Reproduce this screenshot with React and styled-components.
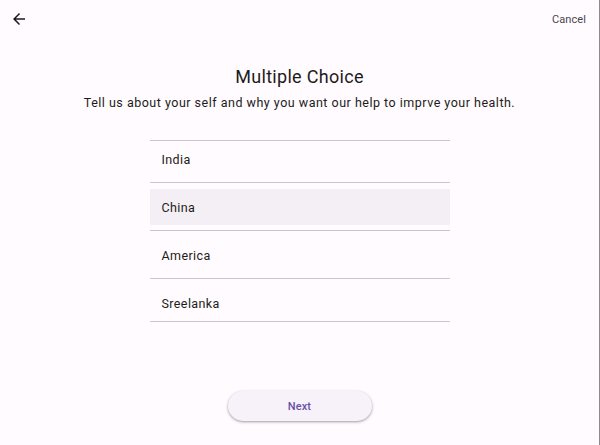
import React, { useState } from "react";
import styled, { createGlobalStyle } from "styled-components";

const options = ["India", "China", "America", "Sreelanka"];

const GlobalStyle = createGlobalStyle`
  html, body {
    margin: 0;
    height: 100%;
    background: #fffbfe;
    font-family: Roboto, "Noto Sans", sans-serif;
    color: #1d1b20;
  }
  #root {
    height: 100%;
  }
`;

const App = () => {
  const [selected, setSelected] = useState("China");

  return (
    <>
      <GlobalStyle />
      <Page>
        <Header>
          <IconButton aria-label="Back">
            <svg width="18" height="18" viewBox="0 0 24 24" fill="#1d1b20">
              <path d="M20 11H7.83l5.59-5.59L12 4l-8 8 8 8 1.41-1.41L7.83 13H20v-2z" />
            </svg>
          </IconButton>
          <TextButton>Cancel</TextButton>
        </Header>

        <Main>
          <Title>Multiple Choice</Title>
          <Subtitle>
            Tell us about your self and why you want our help to imprve your
            health.
          </Subtitle>

          <List>
            {options.map((option) => (
              <Row key={option} onClick={() => setSelected(option)}>
                <Tile $active={selected === option}>{option}</Tile>
              </Row>
            ))}
          </List>
        </Main>

        <Footer>
          <NextButton>Next</NextButton>
        </Footer>
      </Page>
    </>
  );
};

const Page = styled.div`
  height: 100%;
  box-sizing: border-box;
  border-right: 1px solid #8c8c8c;
  display: flex;
  flex-direction: column;
`;

const Header = styled.header`
  height: 38px;
  display: flex;
  align-items: center;
  justify-content: space-between;
  padding: 0 13px 0 10px;
`;

const IconButton = styled.button`
  display: flex;
  padding: 0;
  border: none;
  background: none;
  cursor: pointer;
`;

const TextButton = styled.button`
  padding: 0;
  border: none;
  background: none;
  font-family: Roboto, sans-serif;
  font-size: 11px;
  letter-spacing: 0.1px;
  color: #49454f;
  cursor: pointer;
`;

const Main = styled.main`
  flex: 1;
  display: flex;
  flex-direction: column;
  align-items: center;
`;

const Title = styled.h1`
  margin: 27px 0 0;
  font-size: 18px;
  line-height: 24px;
  font-weight: 400;
  letter-spacing: 0.3px;
`;

const Subtitle = styled.p`
  margin: 6px 0 0;
  font-size: 12.5px;
  line-height: 16px;
  letter-spacing: 0.5px;
`;

const List = styled.div`
  width: 300px;
  margin-top: 29px;
  border-top: 1px solid #cac4d0;
  border-bottom: 1px solid #cac4d0;
`;

const Row = styled.div`
  height: 48px;
  box-sizing: border-box;
  padding: 6px 0 5px;
  border-bottom: 1px solid #cac4d0;
  cursor: pointer;

  &:first-child {
    margin-top: -6px;
  }
  &:last-child {
    border-bottom: none;
    margin-bottom: -6px;
  }
`;

const Tile = styled.div`
  height: 100%;
  display: flex;
  align-items: center;
  padding-left: 12px;
  font-size: 12.5px;
  letter-spacing: 0.4px;
  background: ${(p) => (p.$active ? "#f4eff4" : "transparent")};
`;

const Footer = styled.footer`
  display: flex;
  justify-content: center;
  padding-bottom: 24px;
`;

const NextButton = styled.button`
  width: 144px;
  height: 30px;
  border: none;
  border-radius: 15px;
  background: #f7f2fa;
  box-shadow: 0 1px 2px rgba(0, 0, 0, 0.25), 0 1px 3px 1px rgba(0, 0, 0, 0.1);
  font-family: Roboto, sans-serif;
  font-size: 11px;
  font-weight: 500;
  letter-spacing: 0.1px;
  color: #6750a4;
  cursor: pointer;
`;

export default App;
